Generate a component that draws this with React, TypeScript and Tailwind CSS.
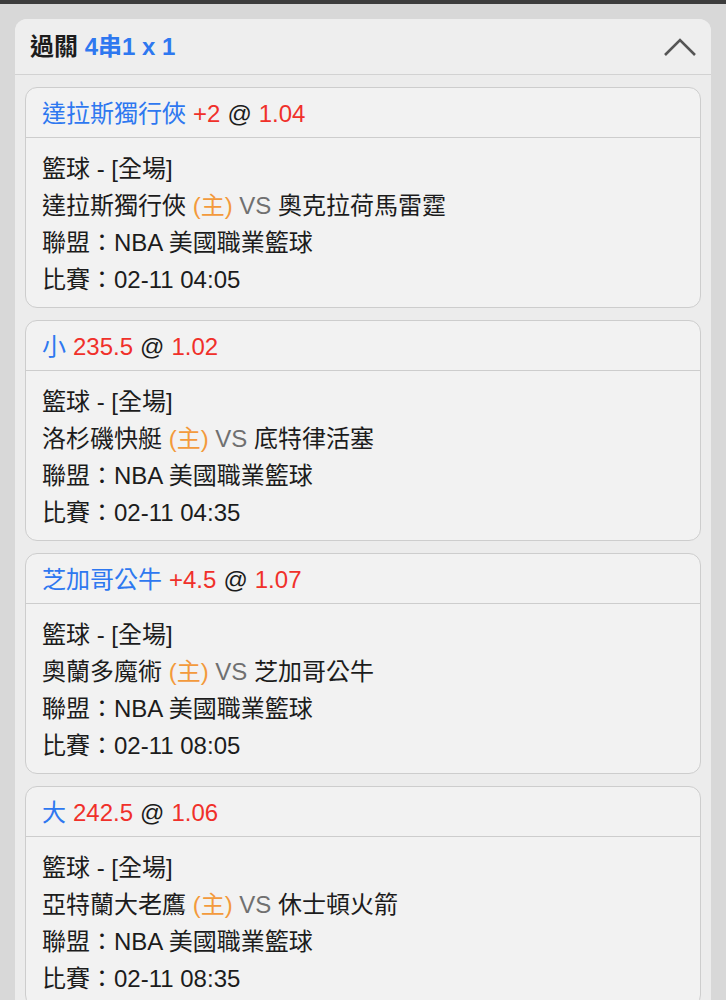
const bets = [
  {
    pick: '達拉斯獨行俠',
    line: '+2',
    odds: '1.04',
    home: '達拉斯獨行俠',
    away: '奧克拉荷馬雷霆',
    time: '02-11 04:05',
  },
  {
    pick: '小',
    line: '235.5',
    odds: '1.02',
    home: '洛杉磯快艇',
    away: '底特律活塞',
    time: '02-11 04:35',
  },
  {
    pick: '芝加哥公牛',
    line: '+4.5',
    odds: '1.07',
    home: '奧蘭多魔術',
    away: '芝加哥公牛',
    time: '02-11 08:05',
  },
  {
    pick: '大',
    line: '242.5',
    odds: '1.06',
    home: '亞特蘭大老鷹',
    away: '休士頓火箭',
    time: '02-11 08:35',
  },
]

export default function App() {
  return (
    <div
      className="min-h-screen bg-[#d8d8d8] text-[#1c1c1c]"
      style={{ fontFamily: '"Liberation Sans", "Noto Sans CJK TC", sans-serif' }}
    >
      <div className="h-[4px] bg-[#3c3c3c]" />
      <div className="px-[15px] pt-[15px]">
        <div className="rounded-t-[12px] bg-[#ececec]">
          {/* parlay header */}
          <div className="flex h-[56px] items-center justify-between border-b border-[#d2d2d2] bg-[#eeeeee] rounded-t-[12px] pl-[15px] pr-[14px]">
            <div className="text-[24px] font-bold">
              過關 <span className="text-[#2e78f0]">4串1 x 1</span>
            </div>
            <svg width="34" height="20" viewBox="0 0 34 20" fill="none">
              <path d="M2 18 L17 3 L32 18" stroke="#555" strokeWidth="2.6" />
            </svg>
          </div>

          <div className="flex flex-col gap-[12px] px-[10px] pt-[12px] pb-[12px]">
            {bets.map((b, i) => (
              <div
                key={i}
                className="rounded-[12px] border border-[#cdcdcd] bg-[#f2f2f2] text-[24px]"
              >
                <div className="flex h-[50px] items-center border-b border-[#cdcdcd] px-[16px] pt-[2px]">
                  <span className="text-[#2e78f0]">{b.pick}</span>
                  <span className="ml-[7px] text-[#f0302a]">{b.line}</span>
                  <span className="ml-[7px] text-[#1c1c1c]">@</span>
                  <span className="ml-[7px] text-[#f0302a]">{b.odds}</span>
                </div>
                <div className="px-[16px] pt-[12px] pb-[9px] leading-[37px]">
                  <div>籃球 - [全場]</div>
                  <div>
                    {b.home} <span className="text-[#f39a3c]">(主)</span>{' '}
                    <span className="text-[#707070]">VS</span> {b.away}
                  </div>
                  <div>聯盟：NBA 美國職業籃球</div>
                  <div>比賽：{b.time}</div>
                </div>
              </div>
            ))}
          </div>
        </div>
      </div>
    </div>
  )
}
